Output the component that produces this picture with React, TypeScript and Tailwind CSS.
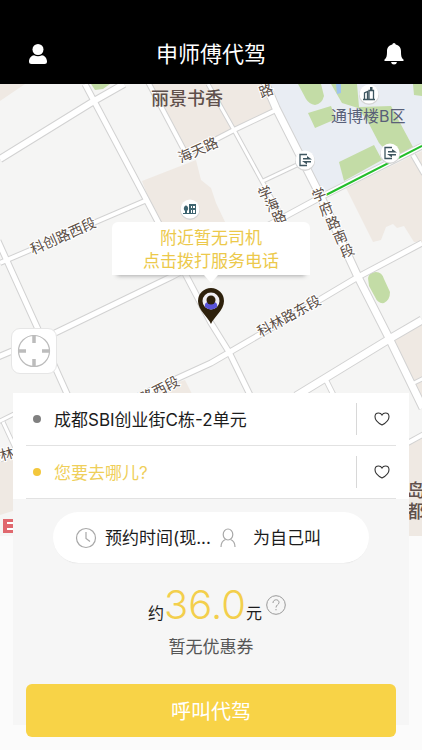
import type { ReactNode } from "react"

const sans = "font-[Inter,'Noto_Sans_CJK_SC',sans-serif]"

// casing first, then the white fill, so crossings stay open
const roads = [
  { d: "M0 159L94 101L124 84", w: 7 },
  { d: "M85 84L94 101L146 199L211 323L229 352L250 395", w: 6 },
  { d: "M0 263L147 200", w: 5 },
  { d: "M-2 241L37 327L68 396", w: 6 },
  { d: "M-2 357L55 333L173 276L284 217L321 197L422 146", w: 6 },
  { d: "M0 459L130 400L211 363L321 299L358 277L422 243", w: 6 },
  { d: "M296 396L391 338L422 320", w: 8 },
  { d: "M264 80L276 108L320 195L358 277L389 338L423 408", w: 8 },
  { d: "M208 84L234 130L263 183L285 222", w: 4 },
  { d: "M147 80L184 150", w: 5 },
  { d: "M180 158L234 130L276 110", w: 5 },
  { d: "M263 181L299 164", w: 4 },
  { d: "M326 380L334 396", w: 5 },
  { d: "M414 383L424 378", w: 4 },
  { d: "M404 445L424 434", w: 5 },
  { d: "M413 155L424 174", w: 5 },
  { d: "M-2 422L16 413", w: 4 },
  { d: "M3 422L16 450", w: 4 },
]

const roadNames = [
  { text: "科创路西段", x: 63, y: 236, angle: -24 },
  { text: "科林路东段", x: 289, y: 316, angle: -29 },
  { text: "科林路西段", x: 147, y: 396, angle: -27 },
  { text: "海天路", x: 198, y: 150, angle: -24 },
  { text: "林", x: 7, y: 454, angle: -15 },
  { text: "路", x: 266, y: 91, angle: -20 },
]

const stackedNames = [
  { text: "学海路", x: 265, y: 193, dx: 7, dy: 12 },
  { text: "学府路南段", x: 319, y: 195, dx: 7, dy: 14 },
]

function Poi({ x, y, children }: { x: number; y: number; children: ReactNode }) {
  return (
    <g transform={`translate(${x} ${y})`}>
      <circle r="10" cy="1" fill="#d5d5d5" />
      <circle r="9.5" fill="#fff" />
      {children}
    </g>
  )
}

function Exit() {
  return (
    <g fill="#3e5660">
      <path d="M2 -5.500H-5V5.500H2" fill="none" stroke="#3e5660" strokeWidth="1.3" />
      <path d="M-2 -2H2V-4L7 -0.500H-2Z" />
      <path d="M6 2.500H2V4.500L-3 1H6Z" />
    </g>
  )
}

function MapView() {
  return (
    <svg viewBox="0 84 422 452" preserveAspectRatio="xMidYMin slice" className="block h-[452px] w-full bg-[#f5f5f4]" aria-label="地图">
      <g fill="#efe9e3">
        <path d="M0 84H25L0 101Z" />
        <path d="M147 84H266L276 108L234 130L184 150Z" />
        <path d="M142 181L196 160L201 180L211 188L216 203L226 224H158Z" />
        <path d="M346 188L422 151V242L414 242L404 226L397 228L393 224L386 227L381 240L373 242Z" />
        <path d="M394 341L422 324V400Z" />
        <path d="M404 446L422 436V536H404Z" />
        <path d="M0 462L16 455V510L0 515Z" />
        <path d="M145 393L185 380L193 396H145Z" />
      </g>
      <path d="M266 84H422V146L320 196L276 108Z" fill="#e9edf3" />
      <g fill="#c3dca6">
        <path d="M91 84H110L103 89L95 90Z" />
        <path d="M298 84H321L324 96Q322 104 315 105Q309 104 306 99Z" />
        <path d="M308 113L331 106L336 119L315 128Z" />
        <path d="M331 84H357L359 107L391 106L413 147L393 158L379 143L368 122L358 108L342 103Z" />
        <path d="M339 162L374 145L382 160L344 181Z" />
        <path d="M413 84H422V96L414 95Z" />
        <path d="M368 278Q369 272 376 272Q382 272 384 279L390 292Q390 300 384 303Q378 304 375 297L369 286Z" />
      </g>
      <path d="M336 84H341V93L337 94Z" fill="#9fc3ee" />

      <g fill="none" stroke="#d2d2d2" strokeLinejoin="round">
        {roads.map((r) => (
          <path key={r.d} d={r.d} strokeWidth={r.w + 1} />
        ))}
      </g>
      <g fill="none" stroke="#fff" strokeLinejoin="round">
        {roads.map((r) => (
          <path key={r.d} d={r.d} strokeWidth={r.w - 1} />
        ))}
      </g>
      <path d="M326 195L422 146" stroke="#22bd2a" strokeWidth="2" />

      <g fontSize="14" fill="#5a4d45" stroke="#fff" strokeWidth="2" paintOrder="stroke" textAnchor="middle">
        {roadNames.map((n) => (
          <text key={n.text} transform={`translate(${n.x} ${n.y}) rotate(${n.angle})`} dy="5">
            {n.text}
          </text>
        ))}
        {stackedNames.map((n) =>
          n.text.split("").map((c, i) => (
            <text key={n.text + i} transform={`translate(${n.x + i * n.dx} ${n.y + i * n.dy}) rotate(-22)`} dy="5">
              {c}
            </text>
          ))
        )}
      </g>
      <g fontSize="18" fill="#5f504b" fontWeight="500">
        <text x="151" y="105">丽景书香</text>
        <text x="407" y="497">岛</text>
        <text x="407" y="518">都</text>
      </g>
      <text x="331" y="122" fontSize="16" fill="#596078">通博楼B区</text>

      <Poi x={190} y={209}>
        <path d="M-1 -5H6V5H-1ZM1 -3V-1H2V-3ZM3 -3V-1H5V-3ZM1 1V4H2V1ZM3 1V4H5V1Z" fill="#3e6470" fillRule="evenodd" />
        <path d="M-7 5V4H-5V2A2 3 0 1 1 -3 2V4H-1V5Z" fill="#3e6470" />
      </Poi>
      <Poi x={369} y={94}>
        <path d="M-4.500 5V-1L-1.500 -2.500V5M0 5V-3.500H4.500V5M-6 5.500H6" fill="none" stroke="#3e5660" strokeWidth="1.3" />
        <path d="M1 -7H3.500V-3H1Z" fill="#3e5660" />
      </Poi>
      <Poi x={305} y={160}><Exit /></Poi>
      <Poi x={390} y={153}><Exit /></Poi>
      <path d="M3 519H15V533H3Z" fill="#e0686e" />
      <path d="M7 522H15V524H7ZM7 528H15V530H7Z" fill="#fff" />
    </svg>
  )
}

function Pin() {
  return (
    <svg viewBox="0 0 28 38" className="mt-1 h-[38px] w-7" aria-hidden="true">
      <path d="M14 37C11 30 1 23 1 14A13 13 0 0 1 27 14C27 23 17 30 14 37Z" fill="#2e210c" />
      <circle cx="14" cy="14" r="8.500" fill="#f1eff4" />
      <path d="M8 20Q7 15 12 15H16Q21 15 20 20Q14 25 8 20Z" fill="#5a54d8" />
      <circle cx="14" cy="13" r="4.500" fill="#2e210c" />
    </svg>
  )
}

function AddressRow({ dot, tone, text }: { dot: string; tone: string; text: string }) {
  return (
    <div className="mx-[13px] flex h-[53px] items-center border-b border-[#e2e2e2]">
      <span className={`ml-[7px] size-2 rounded-full ${dot}`} />
      <button className={`ml-[13px] flex-1 pt-1 text-left text-[17px] ${tone}`}>{text}</button>
      <button aria-label="收藏" className="flex h-8 w-10 items-center justify-center border-l border-[#d8d8d8] pl-[10px]">
        <svg viewBox="0 0 16 14" className="h-[14px] w-4" fill="none" stroke="#333" strokeWidth="1.1">
          <path d="M8 13C5 11.500 1 8.500 1 4.800C1 2.500 2.700 1 4.600 1C6 1 7.300 1.700 8 3C8.700 1.700 10 1 11.400 1C13.300 1 15 2.500 15 4.800C15 8.500 11 11.500 8 13Z" />
        </svg>
      </button>
    </div>
  )
}

export default function App() {
  return (
    <div className={`min-h-screen bg-[#fbfbfb] ${sans}`}>
      <header className="flex h-21 items-end justify-between bg-black px-[18px] pb-[14px] text-white">
        <button aria-label="我的" className="flex h-8 w-10 items-center justify-center">
          <svg viewBox="0 0 18 20" className="h-5 w-[18px]" fill="#fff">
            <circle cx="9" cy="5.500" r="5.500" />
            <path d="M0 17.500C0 14 2.500 11.500 5 11.200Q9 13.500 13 11.200C15.500 11.500 18 14 18 17.500Q18 20 15.500 20H2.500Q0 20 0 17.500Z" />
          </svg>
        </button>
        <h1 className="text-[22px] leading-8">申师傅代驾</h1>
        <button aria-label="消息" className="flex h-8 w-10 items-center justify-end">
          <svg viewBox="0 0 20 22" className="h-[22px] w-5" fill="#fff">
            <path d="M10 0Q11.500 0 11.700 1.500C15.500 2.300 17 5 17 8.500C17 13 17.500 15 19.500 16.500Q20 18 19 18H1Q0 18 .5 16.500C2.500 15 3 13 3 8.500C3 5 4.500 2.300 8.300 1.500Q8.500 0 10 0ZM7 19H13Q12.500 21.500 10 21.500Q7.500 21.500 7 19Z" />
          </svg>
        </button>
      </header>

      <main>
        <section className="relative">
          <MapView />
          <div className="absolute inset-x-0 top-[138px] flex flex-col items-center">
            <button className="w-[198px] rounded-t-md bg-white pt-[5px] pb-[2px] text-[17px] leading-[23px] text-[#ecc94b] shadow-[0_6px_4px_-5px_#aaa]">
              附近暂无司机
              <br />
              点击拨打服务电话
            </button>
            <svg viewBox="0 0 14 8" className="h-2 w-[14px]" fill="#fff">
              <path d="M0 0H14L7 8Z" />
            </svg>
            <Pin />
          </div>
          <button aria-label="定位" className="absolute top-[244px] left-[11px] flex size-[46px] items-center justify-center rounded-[9px] border border-[#e6e6e6] bg-white">
            <svg viewBox="0 0 34 34" className="size-[34px]" fill="none" stroke="#bcbcbc">
              <circle cx="17" cy="17" r="15.500" strokeWidth="1.2" />
              <path d="M17 1V9M17 25V33M1 17H9M25 17H33" strokeWidth="3.500" />
            </svg>
          </button>
        </section>

        <section className="relative mx-[13px] -mt-[143px] bg-[#f6f6f6]">
          <div className="bg-white">
            <AddressRow dot="bg-[#808080]" tone="text-[#1c1c1c]" text="成都SBI创业街C栋-2单元" />
            <AddressRow dot="bg-[#f3c73c]" tone="text-[#efcf5a]" text="您要去哪儿?" />
          </div>

          <div className="mx-10 mt-[13px] flex h-[51px] items-center rounded-full bg-white text-[17px] text-[#1c1c1c] shadow-[0_1px_1px_-1px_#ccc]">
            <button className="ml-[22px] flex items-center gap-2">
              <svg viewBox="0 0 22 22" className="size-[22px]" fill="none" stroke="#a8a8a8" strokeWidth="1.2">
                <circle cx="11" cy="11" r="9.500" />
                <path d="M11 5V11.500L15 14.500" />
              </svg>
              <span className="pt-[3px]">预约时间(现...</span>
            </button>
            <button className="ml-2 flex items-center gap-4">
              <svg viewBox="0 0 18 20" className="h-5 w-[18px]" fill="none" stroke="#a8a8a8" strokeWidth="1.2">
                <ellipse cx="9" cy="6.500" rx="4.800" ry="5.500" />
                <path d="M2 19C2 15 4 12.500 6.500 11.500M16 19C16 15 14 12.500 11.500 11.500" />
              </svg>
              <span className="pt-[3px]">为自己叫</span>
            </button>
          </div>

          <div className="mt-[18px] flex h-12 items-baseline justify-center pl-3 text-[#1c1c1c]">
            <span className="text-base">约</span>
            <strong className="text-[40px] leading-[48px] font-light text-[#f3cf4c]">36.0</strong>
            <span className="text-base">元</span>
            <button aria-label="计价说明" className="ml-1 self-center">
              <svg viewBox="0 0 20 20" className="size-5" fill="none" stroke="#999" strokeWidth="1">
                <circle cx="10" cy="10" r="9.300" />
                <path d="M7 8C7 3.800 13 3.800 13 7.500C13 9.800 10 9.800 10 12.500M10 14V15.300" />
              </svg>
            </button>
          </div>
          <p className="mt-[6px] text-center text-[17px] leading-6 text-[#555]">暂无优惠券</p>
          <div className="mt-[25px] px-[13px]">
            <button className="-mb-[14px] h-[53px] w-full rounded-md bg-[#f8d347] pt-[2px] text-[20px] text-white">呼叫代驾</button>
          </div>
        </section>
      </main>
    </div>
  )
}
